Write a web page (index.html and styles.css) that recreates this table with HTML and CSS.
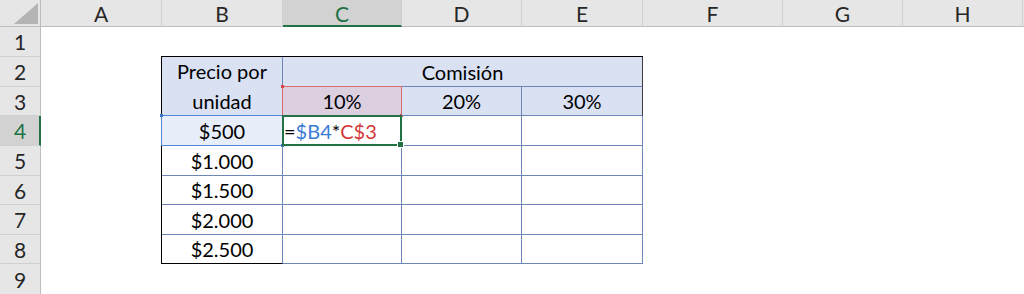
FILE: index.html
```html
<!DOCTYPE html>
<html lang="es">
<head>
<meta charset="utf-8">
<title>Comisión por unidad</title>
<link rel="stylesheet" href="styles.css">
</head>
<body>
<div class="sheet">
  <div class="corner">
    <svg class="corner-tri" width="40" height="26" viewBox="0 0 40 26"><polygon points="14,24 38,24 38,3" fill="#b4b4b4"/></svg>
  </div>
  <div class="colhead">A</div>
  <div class="colhead">B</div>
  <div class="colhead is-current">C</div>
  <div class="colhead">D</div>
  <div class="colhead">E</div>
  <div class="colhead">F</div>
  <div class="colhead">G</div>
  <div class="colhead">H</div>
  <div class="colhead colhead-rest"></div>

  <div class="rowhead r1">1</div>
  <div class="rowhead r2">2</div>
  <div class="rowhead r3">3</div>
  <div class="rowhead r4 is-current">4</div>
  <div class="rowhead r5">5</div>
  <div class="rowhead r6">6</div>
  <div class="rowhead r7">7</div>
  <div class="rowhead r8">8</div>
  <div class="rowhead r9">9</div>

  <div class="table">
    <div class="cell hdr price-hdr"><span class="wrap-text">Precio por<br>unidad</span></div>
    <div class="cell hdr group-hdr edge-right">Comisión</div>
    <div class="cell hdr ref-red">10%<span class="ref-box ref-box-red"></span></div>
    <div class="cell hdr">20%</div>
    <div class="cell hdr edge-right">30%</div>

    <div class="cell price ref-blue">$500<span class="ref-box ref-box-blue"></span></div>
    <div class="cell formula"><span class="f-op">=</span><span class="f-blue">$B4</span><span class="f-op">*</span><span class="f-red">C$3</span><span class="active-box"><span class="fill-handle"></span></span></div>
    <div class="cell"></div>
    <div class="cell"></div>

    <div class="cell price">$1.000</div>
    <div class="cell"></div>
    <div class="cell"></div>
    <div class="cell"></div>

    <div class="cell price">$1.500</div>
    <div class="cell"></div>
    <div class="cell"></div>
    <div class="cell"></div>

    <div class="cell price">$2.000</div>
    <div class="cell"></div>
    <div class="cell"></div>
    <div class="cell"></div>

    <div class="cell price last">$2.500</div>
    <div class="cell"></div>
    <div class="cell"></div>
    <div class="cell"></div>
  </div>
</div>
</body>
</html>
```

FILE: styles.css
```css
html, body {
  margin: 0;
  padding: 0;
  background: #ffffff;
}

body {
  width: 1024px;
  height: 294px;
  overflow: hidden;
  font-family: Lato, "Liberation Sans", sans-serif;
  font-size: 20px;
  color: #000;
}

/* Sheet frame: row-number column, columns A..H, and the rest of the window */
.sheet {
  display: grid;
  grid-template-columns: 41px 121px 121px 119px 120px 121px 140px 120px 120px 1fr;
  grid-template-rows: 27px 30px 30px 29px 30px 30px 29px 30px 29px 30px;
  width: 1024px;
  height: 294px;
  background: #ffffff;
}

.corner {
  grid-column: 1;
  grid-row: 1;
  box-sizing: border-box;
  background: #e6e6e6;
  border-right: 1px solid #bdbdbd;
  border-bottom: 1px solid #bdbdbd;
}

.corner-tri {
  display: block;
}

.colhead {
  grid-row: 1;
  box-sizing: border-box;
  background: #e6e6e6;
  border-right: 1px solid #d0d0d0;
  border-bottom: 1px solid #bdbdbd;
  display: flex;
  align-items: center;
  justify-content: center;
  color: #262626;
  font-size: 21px;
}

.colhead-rest {
  border-right: none;
}

.colhead.is-current {
  background: #d2d2d2;
  color: #217346;
  border-bottom: 2px solid #217346;
  padding-top: 1px;
}

.rowhead {
  grid-column: 1;
  box-sizing: border-box;
  background: #e6e6e6;
  border-right: 1px solid #bdbdbd;
  border-bottom: 1px solid #d0d0d0;
  display: flex;
  align-items: center;
  justify-content: center;
  color: #262626;
  font-size: 21px;
}

.r1 { grid-row: 2; }
.r2 { grid-row: 3; }
.r3 { grid-row: 4; }
.r4 { grid-row: 5; }
.r5 { grid-row: 6; }
.r6 { grid-row: 7; }
.r7 { grid-row: 8; }
.r8 { grid-row: 9; }
.r9 { grid-row: 10; border-bottom: none; }

.rowhead.is-current {
  background: #d2d2d2;
  color: #217346;
  border-right: 2px solid #217346;
  padding-left: 1px;
}

/* Data block B2:E8; the negative margin lets its outer border sit on the shared gridline */
.table {
  grid-column: 3 / 7;
  grid-row: 3 / 10;
  margin: -1px 0 0 -1px;
  display: grid;
  grid-template-columns: 121px 119px 120px 121px;
  grid-template-rows: 30px 29px 30px 30px 29px 30px 29px;
  border-left: 1px solid #000;
  border-top: 1px solid #000;
}

.cell {
  position: relative;
  box-sizing: border-box;
  border-right: 1px solid #6f86b9;
  border-bottom: 1px solid #6f86b9;
  display: flex;
  align-items: center;
  justify-content: center;
  white-space: nowrap;
}

.hdr {
  background: #d9e1f2;
}

.price-hdr {
  grid-row: span 2;
}

.wrap-text {
  display: block;
  text-align: center;
  line-height: 30px;
}

.group-hdr {
  grid-column: span 3;
}

.edge-right {
  border-right-color: #3c3c3c;
}

.price.last {
  border-bottom-color: #000;
}

/* Formula being typed into C4 */
.formula {
  justify-content: flex-start;
  padding-left: 1px;
}

.f-op { color: #000; }
.f-blue { color: #3a7bd5; }
.f-red { color: #d23a3a; }

/* Reference highlights drawn over the referenced cells */
.ref-red {
  background: #dccfe0;
}

.ref-blue {
  background: #e8eef9;
}

.ref-box {
  position: absolute;
  top: -1px;
  left: -1px;
  right: -1px;
  bottom: -1px;
  border: 1px solid;
  pointer-events: none;
}

.ref-box-red {
  border-color: #e06a6a;
  color: #d24848;
}

.ref-box-blue {
  border-color: #4f86d6;
  color: #3e78cf;
}

.ref-box::before,
.ref-box::after {
  content: "";
  position: absolute;
  width: 3px;
  height: 3px;
  background: currentColor;
}

.ref-box::before {
  top: -2px;
  left: -2px;
}

.ref-box::after {
  bottom: -2px;
  right: -2px;
}

/* Active cell frame with fill handle */
.active-box {
  position: absolute;
  top: -1px;
  left: -1px;
  right: -1px;
  bottom: -1px;
  border: 2px solid #217346;
  z-index: 2;
}

.fill-handle {
  position: absolute;
  right: -4px;
  bottom: -4px;
  width: 5px;
  height: 5px;
  background: #217346;
  border: 1px solid #fff;
}
```
